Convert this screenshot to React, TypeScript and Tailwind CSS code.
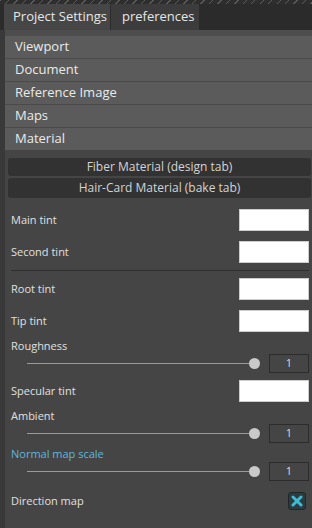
import React from "react";

const font = { fontFamily: '"Open Sans", "Noto Sans", sans-serif' };

function ColorRow({ label }: { label: string }) {
  return (
    <div className="flex h-[22px] items-center justify-between">
      <span className="text-[11px] text-[#e0e0e0]">{label}</span>
      <div className="h-[22px] w-[70px] border border-[#cdcdcd] bg-white" />
    </div>
  );
}

function SliderRow({ value }: { value: string }) {
  return (
    <div className="flex h-[20px] items-center">
      <div className="ml-[16px] h-px flex-1 bg-[#4db4de]" />
      <div className="h-[11px] w-[11px] shrink-0 rounded-full bg-[#c9c9c9]" />
      <div className="ml-[9px] flex h-[19px] w-[40px] shrink-0 items-center justify-center border border-[#2c2c2c] text-[11px] text-[#dcdcdc]">
        {value}
      </div>
    </div>
  );
}

export default function App() {
  const sections = ["Viewport", "Document", "Reference Image", "Maps", "Material"];

  return (
    <div className="h-[528px] w-[312px] overflow-hidden bg-[#2b2b2b]" style={font}>
      {/* hatched strip */}
      <div className="h-[4px] bg-[#2e2e2e] bg-[repeating-linear-gradient(135deg,#5a5a5a_0_1px,transparent_1px_6px)]" />

      {/* tabs */}
      <div className="flex h-[26px] pl-[4px]">
        <div className="flex w-[106px] items-center bg-[#464646] pl-[9px] text-[13px] text-[#e6e6e6]">
          Project Settings
        </div>
        <div className="ml-px flex w-[88px] items-center bg-[#3c3c3c] pl-[11px] text-[13px] text-[#e6e6e6]">
          preferences
        </div>
      </div>

      <div className="flex h-[498px]">
        <div className="w-[5px] bg-[#393939]" />
        <div className="flex-1 bg-[#454545]">
          <div className="h-[6px] bg-[#4d4d4d]" />
          {sections.map((s, i) => (
            <div
              key={s}
              className={`flex items-center bg-[#5b5b5b] pl-[10px] text-[13px] text-[#eaeaea] ${
                i < sections.length - 1 ? "h-[23px] border-b border-[#4a4a4a]" : "h-[22px]"
              }`}
            >
              {s}
            </div>
          ))}

          <div className="pl-[6px] pr-[3px]">
            <div className="-ml-[3px] mr-[-2px] mt-[8px] flex h-[18px] items-center justify-center rounded-[3px] bg-[#323232] text-[12px] text-[#d4d4d4]">
              Fiber Material (design tab)
            </div>
            <div className="-ml-[3px] mr-[-2px] mt-[2px] flex h-[20px] items-center justify-center rounded-[3px] bg-[#323232] text-[12px] text-[#d4d4d4]">
              Hair-Card Material (bake tab)
            </div>

            <div className="mt-[11px]">
              <ColorRow label="Main tint" />
            </div>
            <div className="mt-[10px]">
              <ColorRow label="Second tint" />
            </div>
            <div className="mt-[7px] h-px bg-[#2f2f2f]" />
            <div className="mt-[7px]">
              <ColorRow label="Root tint" />
            </div>
            <div className="mt-[10px]">
              <ColorRow label="Tip tint" />
            </div>

            <div className="mt-[8px] flex h-[13px] items-center text-[11px] text-[#e0e0e0]">Roughness</div>
            <SliderRow value="1" />

            <div className="mt-[7px]">
              <ColorRow label="Specular tint" />
            </div>

            <div className="mt-[8px] flex h-[13px] items-center text-[11px] text-[#e0e0e0]">Ambient</div>
            <SliderRow value="1" />

            <div className="mt-[5px] flex h-[13px] items-center text-[11px] text-[#5fb6de]">Normal map scale</div>
            <SliderRow value="1" />

            <div className="mt-[11px] flex h-[18px] items-center justify-between">
              <span className="text-[11px] text-[#e0e0e0]">Direction map</span>
              <div className="mr-[3px] flex h-[18px] w-[18px] items-center justify-center rounded-[3px] border border-[#1e2729] bg-[#2c3b3f]">
                <svg width="12" height="12" viewBox="0 0 12 12">
                  <path d="M2 2 L10 10 M10 2 L2 10" stroke="#3fbad2" strokeWidth="3" strokeLinecap="round" />
                </svg>
              </div>
            </div>
          </div>
        </div>
      </div>
    </div>
  );
}
